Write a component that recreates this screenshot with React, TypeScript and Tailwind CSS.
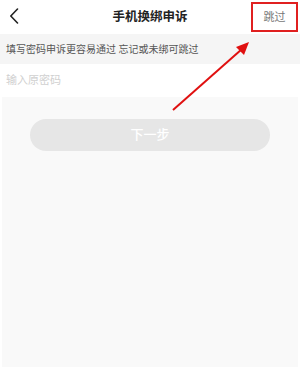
import React from "react";

const FONT = { fontFamily: '"Noto Sans", "Noto Sans CJK SC", sans-serif' };

export default function App() {
  return (
    <div
      className="relative flex h-[369px] w-[300px] flex-col overflow-hidden bg-white"
      style={FONT}
    >
      {/* header */}
      <header className="relative flex h-[34px] shrink-0 items-center justify-center bg-white">
        <svg
          className="absolute left-[9px] top-[8px]"
          width="10"
          height="16"
          viewBox="0 0 10 16"
          fill="none"
        >
          <path d="M8.5 1 L1.8 8 L8.5 15" stroke="#222" strokeWidth="1.6" strokeLinecap="round" strokeLinejoin="round" />
        </svg>
        <h1 className="text-[12.5px] font-bold text-[#222]">手机换绑申诉</h1>
        <div className="absolute right-[2px] top-[2px] flex h-[30px] w-[47px] items-center justify-center border-2 border-[#e02020]">
          <span className="text-[11px] text-[#777]">跳过</span>
        </div>
      </header>

      {/* hint */}
      <div className="flex h-[30px] shrink-0 items-center bg-[#f5f5f5] px-[6px]">
        <p className="text-[10px] text-[#555]">填写密码申诉更容易通过 忘记或未绑可跳过</p>
      </div>

      {/* input */}
      <div className="flex h-[33px] shrink-0 items-center bg-white px-[6px]">
        <span className="text-[11px] text-[#d0d0d0]">输入原密码</span>
      </div>

      {/* body */}
      <div className="mx-[2px] mb-[2px] flex flex-1 flex-col bg-[#f9f9f9] px-[28px] pt-[22px]">
        <button
          type="button"
          className="flex h-[32px] w-full items-center justify-center rounded-full bg-[#e6e6e6] text-[13px] font-medium text-white"
        >
          下一步
        </button>
      </div>

      {/* annotation arrow */}
      <svg className="pointer-events-none absolute left-0 top-0" width="300" height="369">
        <line x1="173" y1="110" x2="242" y2="49" stroke="#e01010" strokeWidth="2" />
        <polygon points="249,42 236,47 244,55" fill="#e01010" />
      </svg>
    </div>
  );
}
